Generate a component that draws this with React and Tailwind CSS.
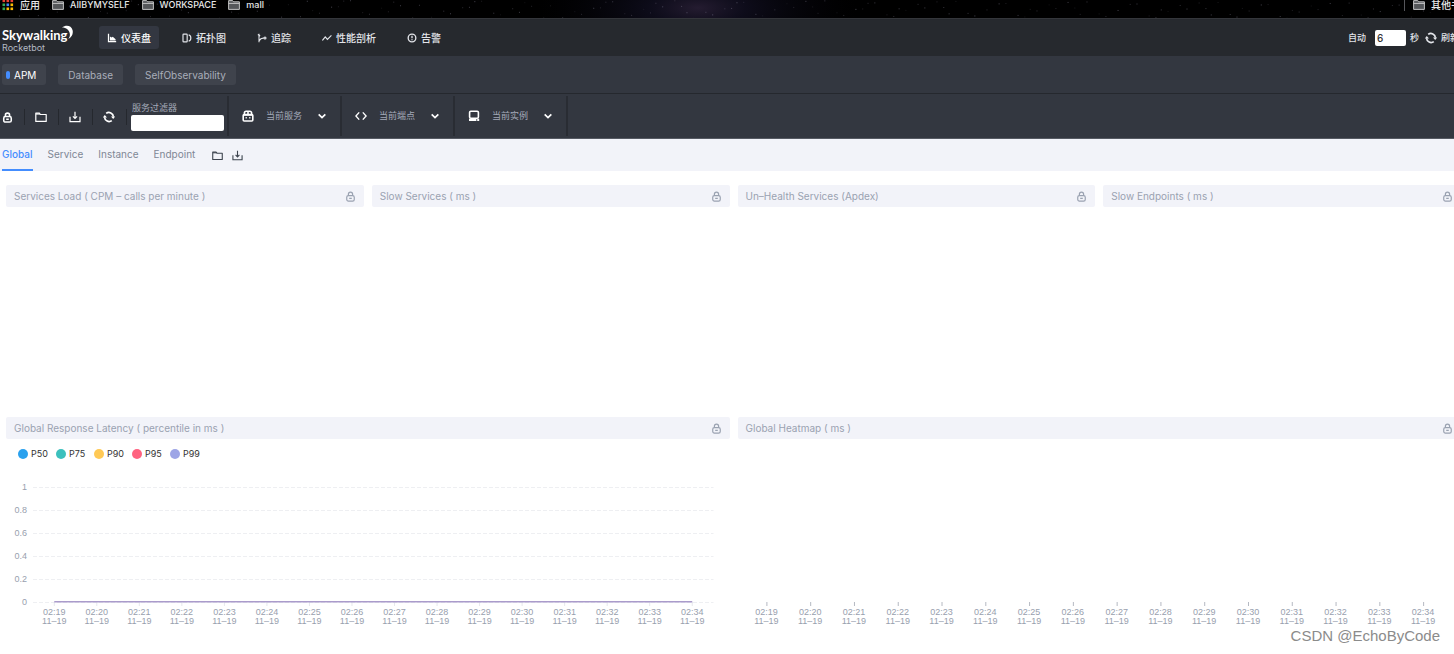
import React from "react";

const times = Array.from({ length: 16 }, (_, i) => `02:${19 + i}`);
const yTicks = ["1", "0.8", "0.6", "0.4", "0.2", "0"];
const series = [
  ["P50", "bg-[#2aa1ee]"],
  ["P75", "bg-[#3cc0bd]"],
  ["P90", "bg-[#ffc955]"],
  ["P95", "bg-[#ff6380]"],
  ["P99", "bg-[#9da5e6]"],
];

function Svg({ className = "size-3", children, sw = 1.5 }) {
  return (
    <svg className={`${className} shrink-0`} viewBox="0 0 12 12" fill="none" stroke="currentColor" strokeWidth={sw} aria-hidden="true">
      {children}
    </svg>
  );
}

const Lock = ({ className, sw = 1.3 }) => (
  <Svg className={className} sw={sw}>
    <rect x="1.9" y="5" width="8.2" height="6" rx="1.8" />
    <path d="M3.7 5V3.5a2.3 2.3 0 0 1 4.6 0V5M4.6 8h2.8" />
  </Svg>
);
const Folder = ({ className }) => (
  <Svg className={className} sw={1.2}>
    <path d="M.8 10.4V2.2h3.6l1 1.3h5.8v6.9z" strokeLinejoin="round" />
    <path d="M1 3h4" />
  </Svg>
);
const Download = ({ className }) => (
  <Svg className={className} sw={1.2}>
    <path d="M1 5.8v4.8h10V5.8M6 .8v6.6M3.9 5.4 6 7.5l2.1-2.1" />
  </Svg>
);
const Refresh = ({ className }) => (
  <Svg className={className} sw={1.7}>
    <path d="M3.2 2.4a4.5 4.5 0 0 1 7.2 3.4M8.8 9.6a4.5 4.5 0 0 1-7.2-3.4" />
    <path d="M8 5.4h4.2L10.2 8zM4 6.6H-.2L1.8 4z" fill="currentColor" stroke="none" />
  </Svg>
);
const ChartIcon = () => (
  <Svg className="size-[10px]">
    <path d="M1.8 1v9.2H11" />
    <path d="M3.5 9V4.2l2 1.2 1.4-1 3.4 3V9z" fill="currentColor" stroke="none" />
  </Svg>
);
const TopoIcon = () => (
  <Svg className="size-[10px]" sw={1.4}>
    <rect x="1.2" y="1.4" width="5" height="9.2" rx="0.8" />
    <path d="M8 2.2c1.6.4 2.6 1.8 2.6 3.8S9.6 9.4 8 9.8" />
  </Svg>
);
const TraceIcon = () => (
  <Svg className="size-[10px]" sw={1.3}>
    <path d="M2.4 1v10M2.4 9.6C3.4 7.4 5.2 6 8.4 6M1 1.8l2.8 1.8" />
    <circle cx="9.6" cy="6" r="1.2" />
  </Svg>
);
const ProfileIcon = () => (
  <Svg className="size-[10px]" sw={1.4}>
    <path d="m.5 9 3.4-4.4 2.6 3 4.8-4.8" />
  </Svg>
);
const AlarmIcon = () => (
  <Svg className="size-[10px]" sw={1.6}>
    <circle cx="6" cy="6" r="4.6" />
    <path d="M6 3.4v3M6 7.4v1.2" />
  </Svg>
);
const ServiceIcon = () => (
  <Svg sw={1.6}>
    <rect x="1.2" y="4.6" width="9.6" height="6.4" rx="1" />
    <path d="M2.4 4.6V3a1.8 1.8 0 0 1 1.8-1.8h3.6A1.8 1.8 0 0 1 9.6 3v1.6M1.4 5h9.2M3.6 7.8h1.2M7.2 7.8h1.2M6 1.4v3" />
  </Svg>
);
const CodeIcon = () => (
  <Svg sw={1.4}>
    <path d="M4.2 2.4.9 6l3.3 3.6M7.8 2.4 11.1 6 7.8 9.6" />
  </Svg>
);
const InstanceIcon = () => (
  <Svg sw={1.6}>
    <rect x="1.6" y="1.2" width="8.8" height="7" rx="1.2" />
    <path d="M1 9.9h7.4M9.2 9.9h2" strokeWidth="2.2" />
  </Svg>
);
const Chevron = () => (
  <Svg className="pointer-events-none size-[10px]" sw={2}>
    <path d="m2 4 4 4 4-4" />
  </Svg>
);

function Bookmark({ children, large }) {
  return (
    <a href="#bookmark" className="flex items-center gap-[6px]">
      <svg className="size-3 shrink-0" viewBox="0 0 12 12" aria-hidden="true">
        <path d="M.6 10.4V1.6h4l1 1.2h5.8v7.6z" fill="#55575a" stroke="#d0d0d0" strokeWidth="0.9" />
        <path d="M.6 4.4h10.8" stroke="#d0d0d0" strokeWidth="0.9" />
      </svg>
      <span className={large ? "text-[10px]" : "text-[9px]"}>{children}</span>
    </a>
  );
}

const stars = Array.from({ length: 170 }, (_, i) => ({
  x: (i * 61.803) % 100,
  y: (i * 7.31 + ((i * i) % 5)) % 18,
  o: 0.1 + ((i * 37) % 10) / 34,
}));

function BookmarkBar() {
  const dots = ["#e94235", "#e94235", "#e94235", "#34a853", "#4285f4", "#fbbc05", "#34a853", "#fbbc05", "#fbbc05"];
  return (
    <div className="relative flow-root h-[18px] overflow-hidden bg-black text-[10px] font-medium leading-[10px] text-[#e8e8e8]">
      <svg className="absolute inset-0 h-full w-full" aria-hidden="true">
        <defs>
          <radialGradient id="glow">
            <stop offset="0" stopColor="#2b2139" stopOpacity="0.85" />
            <stop offset="0.3" stopColor="#131125" stopOpacity="0.7" />
            <stop offset="1" stopColor="#05050c" stopOpacity="0" />
          </radialGradient>
        </defs>
        <ellipse cx="48%" cy="8" rx="11%" ry="60" fill="url(#glow)" />
        {stars.map((s, i) => (
          <rect key={i} x={`${s.x}%`} y={s.y} width="1" height="1" fill="#b9b6d0" opacity={s.o} />
        ))}
      </svg>
      <div className="relative -mr-[17px] -mt-px flex items-start gap-3 pl-[2px]">
        <a href="#apps" className="flex items-center gap-[6px]">
          <svg className="size-3 shrink-0" viewBox="0 0 12 12" aria-hidden="true">
            {dots.map((c, i) => (
              <rect key={i} x={0.5 + (i % 3) * 4} y={0.5 + Math.floor(i / 3) * 4} width="2.6" height="2.6" fill={c} />
            ))}
          </svg>
          <span>应用</span>
        </a>
        <Bookmark>AIIBYMYSELF</Bookmark>
        <Bookmark>WORKSPACE</Bookmark>
        <Bookmark>mall</Bookmark>
        <div className="ml-auto flex gap-2 whitespace-nowrap">
          <span className="h-3 w-px bg-[#55565a]" />
          <Bookmark large>其他书签</Bookmark>
        </div>
      </div>
    </div>
  );
}

function Header() {
  const nav = [
    ["仪表盘", ChartIcon],
    ["拓扑图", TopoIcon],
    ["追踪", TraceIcon],
    ["性能剖析", ProfileIcon],
    ["告警", AlarmIcon],
  ];
  return (
    <header className="-mr-[5px] flex h-[38px] items-center border-t border-[#34363b] bg-[#26292e] pl-[2px] text-[#e3e5ea]">
      <a href="#home" className="block w-[97px] pt-[3px]">
        <span className="flex h-[18px] items-end text-white">
          <span className="font-['Lato'] text-[13px] font-bold leading-4">Skywalking</span>
          <svg className="-ml-[8px] mb-[2px] size-4 shrink-0" viewBox="0 0 16 16" aria-hidden="true">
            <path d="M3 2.5C7-.4 12.4.4 13.6 5.3c.8 3.6-.8 7.3-4.4 8.7 1.4-1.4 1.9-3.4 1.6-5.3C10.4 5.1 7.2 2.5 3 2.5z" fill="#fff" />
          </svg>
        </span>
        <span className="block text-[9px] leading-[10px] text-[#b4b9c4]">Rocketbot</span>
      </a>
      <nav className="flex gap-[15px] text-[10px] font-medium leading-4">
        {nav.map(([t, Icon], i) => (
          <a
            key={t}
            href="#nav"
            className={`flex h-[23px] items-center gap-1 rounded-[3px] px-2 ${i === 0 ? "bg-[#333741] text-white" : ""}`}
          >
            <Icon />
            {t}
          </a>
        ))}
      </nav>
      <div className="ml-auto flex items-center text-[9px] font-medium leading-4 whitespace-nowrap">
        <label htmlFor="auto" className="mr-[9px]">自动</label>
        <input id="auto" defaultValue="6" className="mr-1 h-4 w-[31px] rounded-[2px] bg-white pl-[2px] text-[10px] text-[#333]" />
        <span className="mr-[6px]">秒</span>
        <button type="button" className="flex items-center gap-1">
          <Refresh />
          刷新
        </button>
      </div>
    </header>
  );
}

function Selector({ id, label, icon }) {
  return (
    <div className="flex h-10 w-[113px] items-center border-r-2 border-[#292c33] px-[13px]">
      <span className="text-white">{icon}</span>
      <select
        id={id}
        aria-label={label}
        className="ml-3 min-w-0 flex-1 appearance-none bg-transparent text-[9px] leading-4 text-[#a3a9b8]"
      >
        <option>{label}</option>
      </select>
      <span className="text-white">
        <Chevron />
      </span>
    </div>
  );
}

function Toolbar() {
  const tools = [
    ["Lock", <Lock className="size-[11px]" sw={1.7} />],
    ["Open", <Folder />],
    ["Export", <Download />],
    ["Refresh", <Refresh />],
  ];
  return (
    <div className="flex h-[45px] items-center border-b border-[#565a63] bg-[#333740]">
      <div className="flex pl-[2px] pt-[2px]">
        {tools.map(([name, icon], i) => (
          <React.Fragment key={name}>
            <button
              type="button"
              aria-label={name}
              className={`flex h-4 items-center text-white ${i === 0 ? "w-[22px]" : "w-[33px] pl-[10px]"}`}
            >
              {icon}
            </button>
            <span className="h-4 w-px bg-[#25282e]" />
          </React.Fragment>
        ))}
      </div>
      <div className="flex flex-col pl-1 pr-[3px]">
        <label htmlFor="filter" className="pl-px text-[9px] leading-[14px] text-[#a3a9b8]">服务过滤器</label>
        <input id="filter" className="h-4 w-[93px] rounded-[2px] bg-white px-1 text-[10px]" />
      </div>
      <span className="h-10 w-[2px] bg-[#292c33]" />
      <Selector id="service" label="当前服务" icon={<ServiceIcon />} />
      <Selector id="endpoint" label="当前端点" icon={<CodeIcon />} />
      <Selector id="instance" label="当前实例" icon={<InstanceIcon />} />
    </div>
  );
}

function Card({ title, className = "", children }) {
  return (
    <section className={className}>
      <h2 className="flex h-[22px] items-center justify-between rounded-[2px] bg-[#f2f3f9] px-2 text-[10px] leading-4 text-[#9aa2b1]">
        {title}
        <Lock className="size-[11px]" />
      </h2>
      {children}
    </section>
  );
}

function XLabels() {
  return (
    <div className="grid grid-cols-[repeat(16,minmax(0,1fr))] text-center font-['Liberation_Sans'] text-[9px] leading-[9px] text-[#98a0ae]">
      {times.map((t) => (
        <div key={t}>
          {t}
          <br />
          11–19
        </div>
      ))}
    </div>
  );
}

const pos = (i) => `${((i + 0.5) / 16) * 100}%`;

function LatencyChart() {
  return (
    <div>
      <ul className="flex gap-2 pl-3 pt-[9px] text-[9px] leading-3 text-[#333]">
        {series.map(([name, color]) => (
          <li key={name} className="flex w-[30px] items-center gap-[3px]">
            <span className={`size-[10px] shrink-0 rounded-full ${color}`} />
            {name}
          </li>
        ))}
      </ul>
      <div className="mt-4 flex pr-4">
        <div className="w-[27px] pr-[6px] text-right font-['Liberation_Sans'] text-[9px] leading-[23px] text-[#98a0ae]">
          {yTicks.map((t) => (
            <div key={t}>{t}</div>
          ))}
        </div>
        <div className="min-w-0 flex-1">
          <svg className="block h-[132px] w-full" aria-hidden="true">
            {yTicks.map((t, i) => (
              <line key={t} x1="0" x2="100%" y1={11.5 + i * 23} y2={11.5 + i * 23} stroke="#eeeff2" strokeDasharray="4 2" />
            ))}
            {times.map((t, i) => (
              <line key={t} x1={pos(i)} x2={pos(i)} y1="126" y2="130" stroke="#e6e8ed" />
            ))}
            <line x1={pos(0)} x2={pos(15)} y1="125.8" y2="125.8" stroke="#aa9bcb" strokeWidth="1.5" />
          </svg>
          <XLabels />
        </div>
      </div>
    </div>
  );
}

function HeatmapChart() {
  return (
    <div className="pl-[7px] pr-4 pt-[162px]">
      <svg className="block h-[7px] w-full" aria-hidden="true">
        {times.map((t, i) => (
          <line key={t} x1={pos(i)} x2={pos(i)} y1="1" y2="5" stroke="#b5b9c2" />
        ))}
      </svg>
      <XLabels />
    </div>
  );
}

export default function App() {
  return (
    <div className="relative min-h-screen overflow-hidden bg-white font-['Inter','Noto_Sans_CJK_SC',sans-serif]">
      <BookmarkBar />
      <Header />
      <div className="flex h-[38px] items-center gap-3 border-b border-[#25282e] bg-[#333740] pl-[2px] text-[10px] leading-4 text-[#a9aeba]">
        <button type="button" className="flex h-[21px] items-center gap-1 rounded-[3px] bg-[#3f434c] pl-[4px] pr-[10px] text-white">
          <span className="h-2 w-1 rounded-full bg-[#448dfe]" />
          APM
        </button>
        <button type="button" className="h-[21px] rounded-[3px] bg-[#3f434c] px-[10px]">Database</button>
        <button type="button" className="h-[21px] rounded-[3px] bg-[#3f434c] px-[10px]">SelfObservability</button>
      </div>
      <Toolbar />
      <nav className="flex h-8 items-stretch gap-[15px] bg-[#f2f3f9] pl-[2px] text-[10px] leading-[31px] text-[#7f8795]">
        <a href="#global" className="border-b-2 border-[#448dfe] font-medium text-[#448dfe]">Global</a>
        <a href="#service">Service</a>
        <a href="#instance">Instance</a>
        <a href="#endpoint">Endpoint</a>
        <div className="flex items-center gap-[9px] pl-[2px] text-[#3d444f]">
          <button type="button" aria-label="Open"><Folder className="size-[11px]" /></button>
          <button type="button" aria-label="Export"><Download className="size-[11px]" /></button>
        </div>
      </nav>
      <main className="-mr-[13px] grid grid-cols-4 gap-x-2 px-[6px] pt-[14px]">
        <Card className="min-h-[232px]" title="Services Load ( CPM – calls per minute )" />
        <Card title="Slow Services ( ms )" />
        <Card title="Un–Health Services (Apdex)" />
        <Card title="Slow Endpoints ( ms )" />
        <Card className="col-span-2" title="Global Response Latency ( percentile in ms )">
          <LatencyChart />
        </Card>
        <Card className="col-span-2" title="Global Heatmap ( ms )">
          <HeatmapChart />
        </Card>
      </main>
      <div className="absolute bottom-2 right-[14px] font-['Liberation_Sans'] text-[15px] leading-5 text-[#8b8b8b]">
        CSDN @EchoByCode
      </div>
    </div>
  );
}
